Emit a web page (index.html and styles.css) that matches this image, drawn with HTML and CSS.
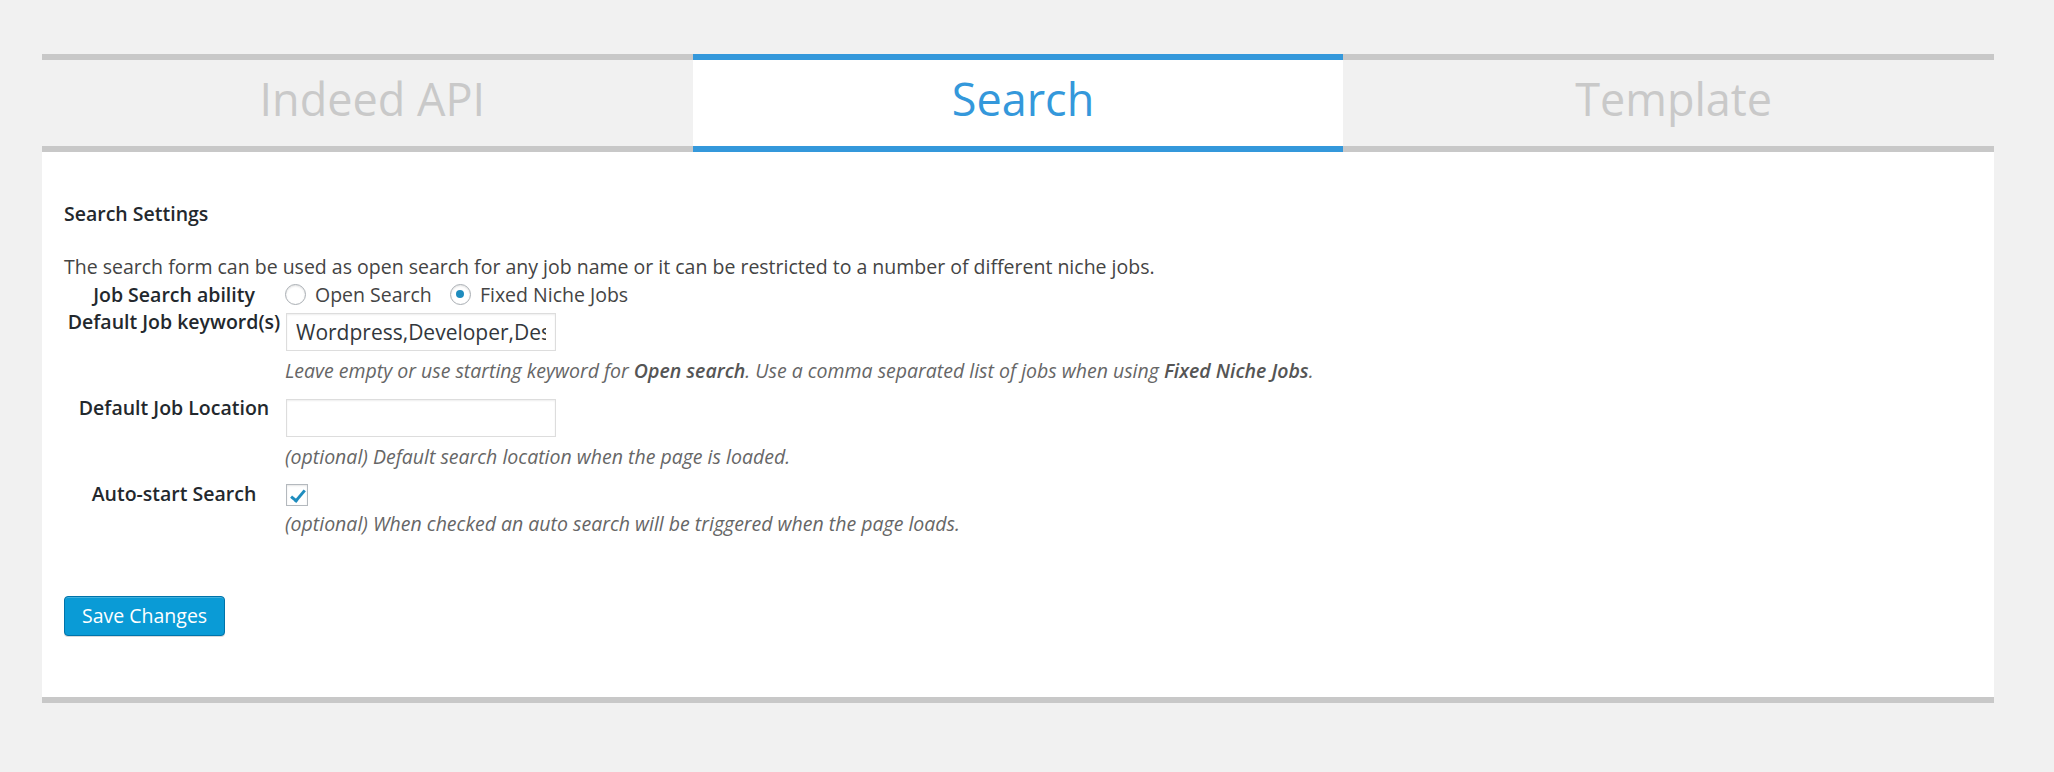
FILE: index.html
```html
<!DOCTYPE html>
<html lang="en">
<head>
<meta charset="utf-8">
<title>Search Settings</title>
<link rel="stylesheet" href="styles.css">
</head>
<body>
<div class="wrap">
  <nav class="tabs">
    <a class="tab">Indeed API</a>
    <a class="tab tab-active">Search</a>
    <a class="tab">Template</a>
  </nav>
  <div class="panel">
    <h3 class="section-title">Search Settings</h3>
    <p class="intro">The search form can be used as open search for any job name or it can be restricted to a number of different niche jobs.</p>
    <table class="form-table">
      <tr class="row-inline">
        <th>Job Search ability</th>
        <td>
          <label class="opt"><input class="radio" type="radio" name="mode"><span>Open Search</span></label>
          <label class="opt"><input class="radio" type="radio" name="mode" checked><span>Fixed Niche Jobs</span></label>
        </td>
      </tr>
      <tr class="row-field">
        <th>Default Job keyword(s)</th>
        <td>
          <input class="text-input" type="text" value="Wordpress,Developer,Designer">
          <p class="description">Leave empty or use starting keyword for <b>Open search</b>. Use a comma separated list of jobs when using <b>Fixed Niche Jobs</b>.</p>
        </td>
      </tr>
      <tr class="row-field">
        <th>Default Job Location</th>
        <td>
          <input class="text-input" type="text" value="">
          <p class="description">(optional) Default search location when the page is loaded.</p>
        </td>
      </tr>
      <tr class="row-check">
        <th>Auto-start Search</th>
        <td>
          <input class="checkbox" type="checkbox" checked>
          <p class="description">(optional) When checked an auto search will be triggered when the page loads.</p>
        </td>
      </tr>
    </table>
    <button class="button-primary" type="button">Save Changes</button>
  </div>
</div>
</body>
</html>
```
FILE: styles.css
```css
html, body {
  margin: 0;
  padding: 0;
}
body {
  background: #f1f1f1;
  font-family: "Open Sans", "Noto Sans", sans-serif;
  font-size: 19.5px;
  line-height: 27.3px;
  color: #444;
}
.wrap {
  margin: 54px 60px 0 42px;
}

/* Tabs */
.tabs {
  display: grid;
  grid-template-columns: repeat(3, 1fr);
}
.tab {
  display: block;
  height: 78px;
  padding: 0 0 8px 10px;
  line-height: 78px;
  text-align: center;
  font-size: 45px;
  color: #c9c9c9;
  background: #f1f1f1;
  border-top: 6px solid #c8c8c8;
  border-bottom: 6px solid #c8c8c8;
  text-decoration: none;
}
.tab-active {
  background: #fff;
  color: #3498db;
  border-top-color: #3498db;
  border-bottom-color: #3498db;
}

/* Panel */
.panel {
  background: #fff;
  border-bottom: 6px solid #c8c8c8;
  padding: 48px 22px 61px;
}
.section-title {
  margin: 0 0 26px;
  font-size: 19.5px;
  font-weight: 600;
  line-height: 27.3px;
  color: #23282d;
}
.intro {
  margin: 0;
}

/* Form table */
.form-table {
  border-collapse: separate;
  border-spacing: 2px 0;
}
.form-table th {
  width: 214px;
  padding: 0 1px;
  text-align: center;
  vertical-align: top;
  font-weight: 600;
  color: #23282d;
  white-space: nowrap;
}
.form-table td {
  padding: 0 1px;
  vertical-align: top;
}
.row-field td {
  padding: 5px 1px 10px;
}
.row-check td {
  padding: 4px 1px 10px;
}

/* Radios */
.opt {
  display: inline-flex;
  align-items: center;
  margin-right: 13px;
  vertical-align: top;
  height: 27.3px;
}
.radio {
  appearance: none;
  -webkit-appearance: none;
  width: 21px;
  height: 21px;
  margin: 0 9px 0 0;
  border: 1px solid #a9aeb3;
  border-radius: 50%;
  background: #fff;
  box-shadow: inset 0 1px 2px rgba(0, 0, 0, 0.12);
  position: relative;
  box-sizing: border-box;
}
.radio:checked::before {
  content: "";
  position: absolute;
  left: 5.5px;
  top: 5.5px;
  width: 8px;
  height: 8px;
  border-radius: 50%;
  background: #1e8cbe;
}

/* Text inputs */
.text-input {
  display: block;
  box-sizing: border-box;
  width: 270px;
  height: 38px;
  margin: 0 0 0 1px;
  padding: 0 9px;
  border: 1px solid #ddd;
  box-shadow: inset 0 1px 2px rgba(0, 0, 0, 0.07);
  background: #fff;
  font-family: inherit;
  font-size: 21px;
  color: #32373c;
  outline: none;
}

/* Checkbox */
.checkbox {
  appearance: none;
  -webkit-appearance: none;
  display: block;
  box-sizing: border-box;
  width: 22px;
  height: 22px;
  margin: 0 0 0 1px;
  border: 1px solid #b4b9be;
  background: #fff;
  box-shadow: inset 0 1px 2px rgba(0, 0, 0, 0.1);
  position: relative;
}
.checkbox:checked::before {
  content: "";
  position: absolute;
  left: 7px;
  top: 2px;
  width: 5px;
  height: 12px;
  border-right: 3px solid #1e8cbe;
  border-bottom: 3px solid #1e8cbe;
  transform: rotate(40deg);
}

.description {
  margin: 6px 0 0;
  font-style: italic;
  color: #666;
  white-space: nowrap;
}
.description b {
  font-weight: 600;
  color: #555;
}
.row-check .description {
  margin-top: 4px;
}

/* Button */
.button-primary {
  display: block;
  margin-top: 48px;
  height: 40px;
  padding: 0 17px;
  box-sizing: border-box;
  font-family: inherit;
  font-size: 19.5px;
  line-height: 38px;
  color: #fff;
  background: #0a9bd6;
  border: 1px solid #0073aa;
  border-radius: 4px;
  box-shadow: inset 0 1px 0 rgba(120, 200, 230, 0.5), 0 1px 0 rgba(0, 0, 0, 0.15);
  cursor: pointer;
}
```
